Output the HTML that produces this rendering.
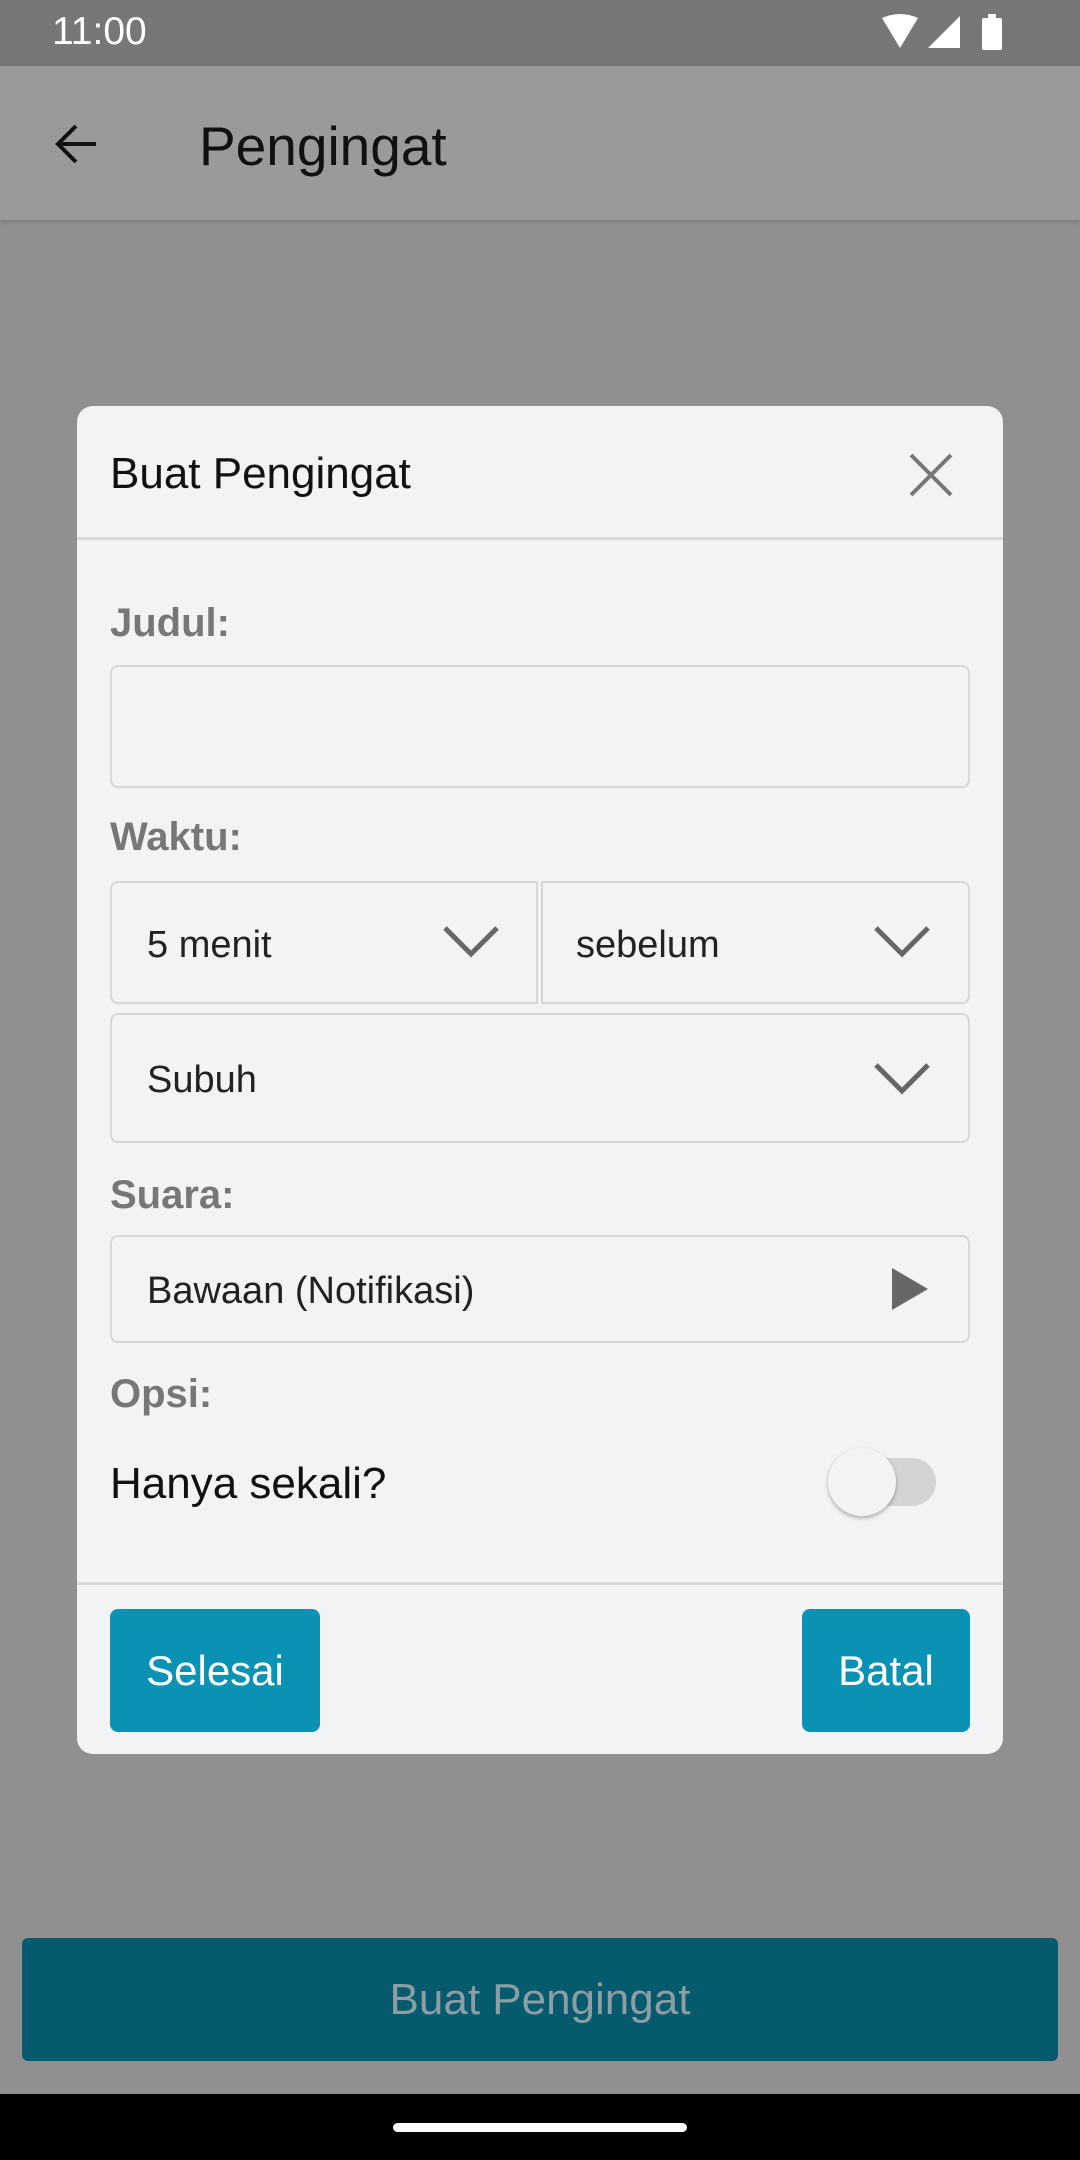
<!DOCTYPE html>
<html><head><meta charset="utf-8"><style>
*{margin:0;padding:0;box-sizing:border-box}
body{width:1080px;height:2160px;background:#909090;font-family:"Liberation Sans",sans-serif;position:relative;overflow:hidden}
.abs{position:absolute}
.sb{left:0;top:0;width:1080px;height:66px;background:#777}
.ab{left:0;top:66px;width:1080px;height:154px;background:#9a9a9a;box-shadow:0 2px 4px rgba(0,0,0,.15)}
.dlg{left:77px;top:406px;width:926px;height:1348px;background:#f2f3f5;border-radius:16px}
.lbl{color:#777;font-size:40px;left:110px;font-weight:bold}
.box{border:2px solid #d5d7da;border-radius:8px;background:#f2f3f5}
.txt{font-size:38px;color:#222}
.btn{background:#0a92b5;border-radius:8px;color:#fff;font-size:42px;display:flex;align-items:center;justify-content:center}
</style></head><body>
<div class="abs sb"></div>
<div class="abs" style="left:52px;top:10px;font-size:39px;color:#fff">11:00</div>
<svg class="abs" style="left:880px;top:14px" width="130" height="38" viewBox="0 0 130 38">
<path d="M2 4 Q20 -4 38 4 L20 34 Z" fill="#fff"/>
<path d="M48 34 L80 34 L80 2 Z" fill="#fff"/>
<rect x="102" y="4" width="20" height="32" rx="2" fill="#fff"/><rect x="108" y="0" width="8" height="5" fill="#fff"/>
</svg>
<div class="abs ab"></div>
<svg class="abs" style="left:52px;top:120px" width="50" height="50" viewBox="0 0 50 50"><path d="M44 24 H6 M24 6 L6 24 L24 42" stroke="#111" stroke-width="4" fill="none"/></svg>
<div class="abs" style="left:199px;top:114px;font-size:55px;color:#111">Pengingat</div>
<div class="abs dlg"></div>
<div class="abs" style="left:110px;top:449px;font-size:44px;color:#111">Buat Pengingat</div>
<svg class="abs" style="left:908px;top:452px" width="46" height="46" viewBox="0 0 46 46"><path d="M3 3 L43 43 M43 3 L3 43" stroke="#777" stroke-width="4"/></svg>
<div class="abs" style="left:77px;top:537px;width:926px;height:3px;background:#d8dadd"></div>
<div class="abs lbl" style="top:601px">Judul:</div>
<div class="abs box" style="left:110px;top:665px;width:860px;height:123px"></div>
<div class="abs lbl" style="top:815px">Waktu:</div>
<div class="abs box" style="left:110px;top:881px;width:428px;height:123px;border-radius:8px 0 0 8px"></div>
<div class="abs box" style="left:541px;top:881px;width:429px;height:123px;border-radius:0 8px 8px 0"></div>
<div class="abs txt" style="left:147px;top:924px">5 menit</div>
<div class="abs txt" style="left:576px;top:924px">sebelum</div>
<div class="abs box" style="left:110px;top:1013px;width:860px;height:130px"></div>
<div class="abs txt" style="left:147px;top:1059px">Subuh</div>
<svg class="abs" style="left:442px;top:925px" width="58" height="34" viewBox="0 0 58 34"><path d="M3 3 L29 29 L55 3" stroke="#666" stroke-width="5" fill="none"/></svg>
<svg class="abs" style="left:873px;top:925px" width="58" height="34" viewBox="0 0 58 34"><path d="M3 3 L29 29 L55 3" stroke="#666" stroke-width="5" fill="none"/></svg>
<svg class="abs" style="left:873px;top:1062px" width="58" height="34" viewBox="0 0 58 34"><path d="M3 3 L29 29 L55 3" stroke="#666" stroke-width="5" fill="none"/></svg>
<div class="abs lbl" style="top:1173px">Suara:</div>
<div class="abs box" style="left:110px;top:1235px;width:860px;height:108px"></div>
<div class="abs txt" style="left:147px;top:1270px">Bawaan (Notifikasi)</div>
<svg class="abs" style="left:892px;top:1268px" width="36" height="42" viewBox="0 0 36 42"><path d="M0 0 L36 21 L0 42 Z" fill="#666"/></svg>
<div class="abs lbl" style="top:1372px">Opsi:</div>
<div class="abs" style="left:110px;top:1459px;font-size:44px;color:#111">Hanya sekali?</div>
<div class="abs" style="left:840px;top:1458px;width:96px;height:48px;border-radius:24px;background:#d4d4d4"></div>
<div class="abs" style="left:828px;top:1448px;width:68px;height:68px;border-radius:50%;background:#f3f3f3;box-shadow:0 2px 4px rgba(0,0,0,.3)"></div>
<div class="abs" style="left:77px;top:1582px;width:926px;height:3px;background:#d8dadd"></div>
<div class="abs btn" style="left:110px;top:1609px;width:210px;height:123px">Selesai</div>
<div class="abs btn" style="left:802px;top:1609px;width:168px;height:123px">Batal</div>
<div class="abs" style="left:22px;top:1938px;width:1036px;height:123px;background:#065a6d;border-radius:6px;color:#8a9ea4;font-size:44px;display:flex;align-items:center;justify-content:center">Buat Pengingat</div>
<div class="abs" style="left:0;top:2094px;width:1080px;height:66px;background:#000"></div>
<div class="abs" style="left:393px;top:2123px;width:294px;height:9px;border-radius:5px;background:#fff"></div>
</body></html>
